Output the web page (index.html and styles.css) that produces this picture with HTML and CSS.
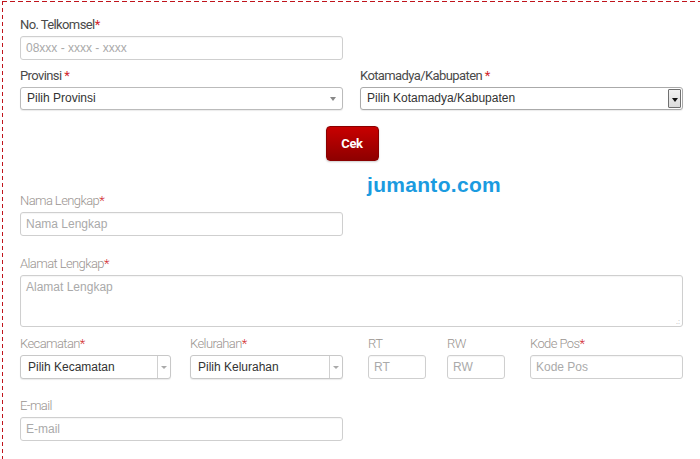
FILE: index.html
```html
<!DOCTYPE html>
<html>
<head>
<meta charset="utf-8">
<link rel="stylesheet" href="styles.css">
</head>
<body>
<div class="frame">
  <form class="form">
    <div class="field half">
      <label class="lbl dark">No. Telkomsel<span class="req">*</span></label>
      <div class="input"><span class="ph">08xxx - xxxx - xxxx</span></div>
    </div>

    <div class="row two">
      <div class="field">
        <label class="lbl dark">Provinsi <span class="req">*</span></label>
        <div class="select"><span class="val">Pilih Provinsi</span><span class="caret"></span></div>
      </div>
      <div class="field">
        <label class="lbl dark">Kotamadya/Kabupaten <span class="req">*</span></label>
        <div class="select native"><span class="val">Pilih Kotamadya/Kabupaten</span><span class="nbtn"><span class="ncaret"></span></span></div>
      </div>
    </div>

    <div class="action">
      <button type="button" class="btn">Cek</button>
    </div>

    <div class="field half first-light">
      <label class="lbl">Nama Lengkap<span class="req">*</span></label>
      <div class="input"><span class="ph">Nama Lengkap</span></div>
    </div>

    <div class="field gap-a">
      <label class="lbl">Alamat Lengkap<span class="req">*</span></label>
      <div class="textarea"><span class="ph">Alamat Lengkap</span><span class="grip">.:</span></div>
    </div>

    <div class="row five">
      <div class="field w151">
        <label class="lbl">Kecamatan<span class="req">*</span></label>
        <div class="select seg"><span class="val">Pilih Kecamatan</span><span class="sbtn"><span class="caret"></span></span></div>
      </div>
      <div class="field w153 ml19">
        <label class="lbl">Kelurahan<span class="req">*</span></label>
        <div class="select seg"><span class="val">Pilih Kelurahan</span><span class="sbtn"><span class="caret"></span></span></div>
      </div>
      <div class="field w58 ml25">
        <label class="lbl">RT</label>
        <div class="input"><span class="ph">RT</span></div>
      </div>
      <div class="field w58 ml21">
        <label class="lbl">RW</label>
        <div class="input"><span class="ph">RW</span></div>
      </div>
      <div class="field w153 ml25">
        <label class="lbl">Kode Pos<span class="req">*</span></label>
        <div class="input"><span class="ph">Kode Pos</span></div>
      </div>
    </div>

    <div class="field half gap-e">
      <label class="lbl">E-mail</label>
      <div class="input"><span class="ph">E-mail</span></div>
    </div>
  </form>
  <div class="watermark">jumanto.com</div>
</div>
</body>
</html>
```

FILE: styles.css
```css
* { box-sizing: border-box; }
html, body { margin: 0; padding: 0; background: #fff; }
body { overflow: hidden; width: 700px; height: 459px; }

.frame {
  position: relative;
  margin: 1px 0 0 2px;
  height: 458px;
  padding: 16px 0 0 18px;
  background-image:
    repeating-linear-gradient(to right, #c0141c 0 5px, transparent 5px 8px),
    repeating-linear-gradient(to bottom, #c0141c 0 4px, transparent 4px 7px);
  background-size: 100% 1px, 1px 100%;
  background-position: 0 0, 0 0;
  background-repeat: no-repeat;
}

.form { width: 663px; display: flex; flex-direction: column; }

.field { display: flex; flex-direction: column; }
.half { width: 323px; }

.row { margin-top: 8px; }
.row.two { display: grid; grid-template-columns: 323px 323px; column-gap: 17px; }
.row.five { display: flex; margin-top: 9px; }
.w151 { width: 151px; }
.w153 { width: 153px; }
.w58 { width: 58px; }
.ml19 { margin-left: 19px; }
.ml21 { margin-left: 21px; }
.ml25 { margin-left: 25px; }

.lbl {
  display: block;
  font-family: Roboto, "Liberation Sans", sans-serif;
  font-weight: 300;
  font-size: 13px;
  letter-spacing: -0.6px;
  line-height: 16px;
  height: 16px;
  margin-bottom: 3px;
  color: #9a9490;
  white-space: nowrap;
}
.lbl.dark { color: #4a4a4a; font-weight: 400; }
.req { color: #d1262c; letter-spacing: 0; }

.input, .select, .textarea {
  border: 1px solid #cfcfcf;
  border-radius: 3px;
  background: #fff;
  font-family: "Liberation Sans", Arial, sans-serif;
  font-size: 12px;
  box-shadow: inset 0 1px 1px rgba(0,0,0,0.04);
}
.input { height: 24px; line-height: 22px; padding: 0 5px; }
.ph { color: #aaa; }

.select {
  position: relative;
  height: 23px;
  line-height: 21px;
  padding: 0 6px;
  border-color: #bbb;
  box-shadow: 0 1px 1px rgba(0,0,0,0.08);
}
.val { color: #333; }
.caret {
  position: absolute;
  right: 6px;
  top: 9px;
  width: 0; height: 0;
  border-left: 3.5px solid transparent;
  border-right: 3.5px solid transparent;
  border-top: 4px solid #888;
}

.select.native { border-color: #aaa; }
.nbtn {
  position: absolute;
  right: 1px; top: 1px; bottom: 1px;
  width: 13px;
  border: 1px solid #707070;
  border-radius: 1px;
  background: linear-gradient(#f2f2f2, #dcdcdc);
}
.ncaret {
  position: absolute;
  left: 2.5px; top: 8px;
  width: 0; height: 0;
  border-left: 3.5px solid transparent;
  border-right: 3.5px solid transparent;
  border-top: 4px solid #111;
}

.select.seg { padding: 0 7px; height: 24px; line-height: 22px; border-color: #c8c8c8; }
.sbtn {
  position: absolute;
  right: 0; top: 0; bottom: 0;
  width: 13px;
  border-left: 1px solid #d0d0d0;
}
.sbtn .caret { right: 3px; top: 10px; border-top: 3px solid #aaa; border-left-width: 3px; border-right-width: 3px; }

.action { display: flex; justify-content: center; margin-top: 16px; }
.btn {
  width: 53px;
  height: 35px;
  margin-left: 1px;
  border: 1px solid #8a0000;
  border-radius: 4px;
  background: linear-gradient(#c80000, #8e0000);
  color: #fff;
  font-family: Roboto, "Liberation Sans", sans-serif;
  font-weight: 700;
  font-size: 13px;
  letter-spacing: -0.4px;
  padding: 0;
  box-shadow: 0 1px 2px rgba(0,0,0,0.2);
}

.first-light { margin-top: 32px; }
.gap-a { margin-top: 20px; }
.gap-e { margin-top: 19px; }

.textarea {
  position: relative;
  height: 52px;
  padding: 3px 5px;
  line-height: 16px;
}
.grip {
  position: absolute;
  right: 2px; bottom: 1px;
  font-size: 7px;
  line-height: 7px;
  color: #aaa;
}

.watermark {
  position: absolute;
  left: 365px;
  top: 172px;
  font-family: "Liberation Sans", Arial, sans-serif;
  font-weight: bold;
  font-size: 21px;
  letter-spacing: 0.3px;
  color: #1b9be0;
}
```
